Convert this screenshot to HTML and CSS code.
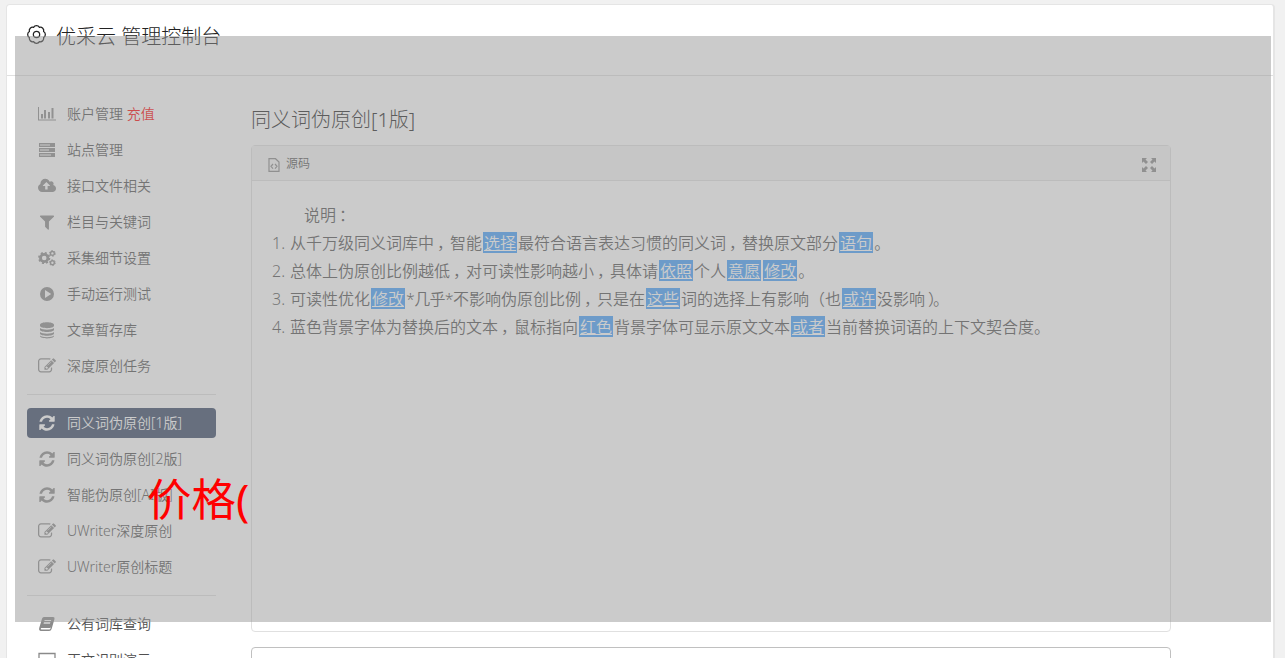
FILE: index.html
```html
<!DOCTYPE html>
<html lang="zh-CN">
<head>
  <meta charset="UTF-8">
  <meta name="viewport" content="width=device-width, initial-scale=1.0">
  <title>优采云 管理控制台</title>
  <link rel="stylesheet" href="styles.css">
</head>
<body>
  <!-- icon set -->
  <svg class="sprite">
    <symbol id="refresh" viewBox="-128 -128 1792 1792"><path d="M1511 928q0 5-1 7-64 268-268 434.500t-478 166.500q-146 0-282.500-55t-243.500-157l-129 129q-19 19-45 19t-45-19-19-45v-448q0-26 19-45t45-19h448q26 0 45 19t19 45-19 45l-137 137q71 66 161 102t187 36q134 0 250-65t186-179q11-17 53-117 8-23 30-23h192q13 0 22.500 9.500t9.500 22.500zm25-800v448q0 26-19 45t-45 19h-448q-26 0-45-19t-19-45 19-45l138-138q-148-137-349-137-134 0-250 65t-186 179q-11 17-53 117-8 23-30 23h-199q-13 0-22.500-9.500t-9.500-22.500v-7q65-268 270-434.500t480-166.500q146 0 284 55.500t245 156.500l130-129q19-19 45-19t45 19 19 45z"/></symbol>
    <symbol id="edit" viewBox="0 0 1792 1792"><path d="M888 1184l116-116-152-152-116 116v56h96v96h56zm440-720q-16-16-33 1l-350 350q-17 17-1 33t33-1l350-350q17-17 1-33zm80 594v190q0 119-84.500 203.500t-203.500 84.500h-832q-119 0-203.500-84.500t-84.500-203.500v-832q0-119 84.500-203.500t203.500-84.500h832q63 0 117 25 15 7 18 23 3 17-9 29l-49 49q-14 14-32 8-23-6-45-6h-832q-66 0-113 47t-47 113v832q0 66 47 113t113 47h832q66 0 113-47t47-113v-126q0-13 9-22l64-64q15-15 35-7t20 29zm-96-738l288 288-672 672h-288v-288zm444 132l-92 92-288-288 92-92q28-28 68-28t68 28l152 152q28 28 28 68t-28 68z"/></symbol>
    <symbol id="filter" viewBox="0 0 1792 1792"><path d="M1595 295q17 41-14 70l-493 493v742q0 42-39 59-13 5-25 5-27 0-45-19l-256-256q-19-19-19-45v-486l-493-493q-31-29-14-70 17-39 59-39h1280q42 0 59 39z"/></symbol>
    <symbol id="cloud" viewBox="-64 0 1920 1792"><path d="M1216 864q0-14-9-23l-352-352q-9-9-23-9t-23 9l-351 351q-10 12-10 24 0 14 9 23t23 9h224v352q0 13 9.500 22.500t22.500 9.500h192q13 0 22.500-9.500t9.500-22.500v-352h224q13 0 22.500-9.500t9.500-22.500zm640 288q0 159-112.500 271.500t-271.500 112.500h-1088q-185 0-316.500-131.500t-131.500-316.500q0-130 70-240t188-165q-2-30-2-43 0-212 150-362t362-150q156 0 285.500 87t188.500 231q71-62 166-62 106 0 181 75t75 181q0 76-41 138 130 31 213.500 135.500t83.500 238.500z"/></symbol>
    <symbol id="chart" viewBox="0 0 18 18"><path d="M0 2h1v12.500h17v1H0zM3 9h2v4.500H3zM6 5h2v8.500H6zM10 7h2v6.500h-2zM13.500 3h2v10.500h-2z"/></symbol>
    <symbol id="server" viewBox="0 0 18 18"><path fill-rule="evenodd" d="M1 2h16v4H1zM2 3.400v1.200h10V3.400zM1 7h16v4H1zM2 8.400v1.200h9V8.400zM1 12h16v4H1zM2 13.400v1.200h11v-1.200z"/></symbol>
    <symbol id="cogs" viewBox="0 0 18 18">
      <g fill="none" stroke="currentColor">
        <circle cx="6.200" cy="9" r="3.700" stroke-width="2.800"/>
        <circle cx="6.200" cy="9" r="5.300" stroke-width="1.600" stroke-dasharray="2.080 2.080"/>
        <circle cx="14.400" cy="4.400" r="1.900" stroke-width="1.400"/>
        <circle cx="14.400" cy="4.400" r="2.900" stroke-width="1" stroke-dasharray="1.520 1.520"/>
        <circle cx="14.400" cy="13.700" r="1.900" stroke-width="1.400"/>
        <circle cx="14.400" cy="13.700" r="2.900" stroke-width="1" stroke-dasharray="1.520 1.520"/>
      </g>
    </symbol>
    <symbol id="play" viewBox="0 0 18 18"><path fill-rule="evenodd" d="M9 2a7 7 0 1 1 0 14A7 7 0 0 1 9 2zM7 5v8l6.200-4z"/></symbol>
    <symbol id="database" viewBox="0 0 18 18"><path d="M2 3.800C2 .4 16 .4 16 3.800v1C16 8 2 8 2 4.800zM2 7c2 2.300 12 2.300 14 0v1.800c0 3-14 3-14 0zM2 11c2 2.300 12 2.300 14 0v1.600c0 3-14 3-14 0zM2 14.500c2 2.200 12 2.200 14 0v.600c0 3.200-14 3.200-14 0z"/></symbol>
    <symbol id="book" viewBox="0 0 18 18"><path fill-rule="evenodd" d="M6 2h9q2 .2 1.500 2L13.600 14q-.6 2-2.500 2H3Q.5 15.500 1.200 13L4 3.800Q4.500 2 6 2zM6.700 5l-.4 1.100h6.500l.4-1.100zM5.900 7.500l-.4 1.100H12l.4-1.100zM3 13q-.8 1.600.7 1.600h7.500q1 0 1.400-1.400l.1-.6-1 .4z"/></symbol>
    <symbol id="screen" viewBox="0 0 18 18"><path d="M1 2.500h16v11H1zM6 16h6" fill="none" stroke="currentColor" stroke-width="1.300"/></symbol>
    <symbol id="gear" viewBox="0 0 18 18">
      <g fill="none" stroke="currentColor" stroke-width="1.200" stroke-linejoin="round">
        <circle cx="9" cy="9" r="3"/>
        <path d="M11.790 2.260A3.200 3.200 0 0 1 15.740 6.210A3.200 3.200 0 0 1 15.740 11.790A3.200 3.200 0 0 1 11.790 15.740A3.200 3.200 0 0 1 6.210 15.740A3.200 3.200 0 0 1 2.260 11.790A3.200 3.200 0 0 1 2.260 6.210A3.200 3.200 0 0 1 6.210 2.260A3.200 3.200 0 0 1 11.790 2.260z"/>
      </g>
    </symbol>
    <symbol id="code" viewBox="0 0 12 14"><path d="M1 .700h6.500L11 4v9.300H1zM5 6 3 8.300 5 10.600M7 6l2 2.300-2 2.300" fill="none" stroke="currentColor" stroke-width="1.200"/></symbol>
    <symbol id="expand" viewBox="0 0 14 14"><path d="M0 0h5L3.500 1.500 6 4 4 6 1.500 3.500 0 5zM14 0v5l-1.500-1.500L10 6 8 4l2.500-2.500L9 0zM0 14V9l1.500 1.500L4 8l2 2-2.500 2.500L5 14zM14 14H9l1.500-1.500L8 10l2-2 2.500 2.500L14 9z"/></symbol>
  </svg>

  <div class="card">
    <header class="card-header">
      <svg class="gear"><use href="#gear"/></svg>
      <h1>优采云 管理控制台</h1>
    </header>
    <div class="content">
      <nav class="sidebar">
        <a class="item"><svg><use href="#chart"/></svg><span>账户管理 <b>充值</b></span></a>
        <a class="item"><svg><use href="#server"/></svg>站点管理</a>
        <a class="item"><svg><use href="#cloud"/></svg>接口文件相关</a>
        <a class="item"><svg><use href="#filter"/></svg>栏目与关键词</a>
        <a class="item"><svg><use href="#cogs"/></svg>采集细节设置</a>
        <a class="item"><svg><use href="#play"/></svg>手动运行测试</a>
        <a class="item"><svg><use href="#database"/></svg>文章暂存库</a>
        <a class="item"><svg><use href="#edit"/></svg>深度原创任务</a>
        <hr>
        <a class="item active"><svg><use href="#refresh"/></svg>同义词伪原创[1版]</a>
        <a class="item"><svg><use href="#refresh"/></svg>同义词伪原创[2版]</a>
        <a class="item"><svg><use href="#refresh"/></svg>智能伪原创[AI版]</a>
        <a class="item"><svg><use href="#edit"/></svg>UWriter深度原创</a>
        <a class="item"><svg><use href="#edit"/></svg>UWriter原创标题</a>
        <hr>
        <a class="item"><svg><use href="#book"/></svg>公有词库查询</a>
        <a class="item"><svg><use href="#screen"/></svg>正文识别演示</a>
      </nav>
      <main class="main">
        <h2>同义词伪原创[1版]</h2>
        <section class="panel">
          <div class="toolbar">
            <svg class="code"><use href="#code"/></svg>
            <span>源码</span>
            <svg class="expand"><use href="#expand"/></svg>
          </div>
          <div class="editor">
            <p class="intro">说明<span class="mid">：</span></p>
            <p><i class="num">1.</i>从千万级同义词库中<span class="mid">，</span>智能<mark>选择</mark>最符合语言表达习惯的同义词<span class="mid">，</span>替换原文部分<mark>语句</mark>。</p>
            <p><i class="num">2.</i>总体上伪原创比例越低<span class="mid">，</span>对可读性影响越小<span class="mid">，</span>具体请<mark>依照</mark>个人<mark>意愿</mark><mark>修改</mark>。</p>
            <p><i class="num">3.</i>可读性优化<mark>修改</mark><span class="star">*几乎*</span>不影响伪原创比例<span class="mid">，</span>只是在<mark>这些</mark>词的选择上有影响（也<mark>或许</mark>没影响<span class="mid">）</span>。</p>
            <p><i class="num">4.</i>蓝色背景字体为替换后的文本<span class="mid">，</span>鼠标指向<mark>红色</mark>背景字体可显示原文文本<mark>或者</mark>当前替换词语的上下文契合度。</p>
          </div>
        </section>
        <div class="result"></div>
      </main>
    </div>
  </div>

  <div class="overlay"></div>
  <div class="caption">价格(</div>
</body>
</html>
```

FILE: styles.css
```css
* {
  box-sizing: border-box;
}

body {
  margin: 0;
  padding: 4px 10px 0 6px;
  height: 658px;
  overflow: hidden;
  background: #f1f1f1;
  color: #505050;
  font-family: "Noto Sans", "Noto Sans CJK SC", sans-serif;
  font-weight: 350;
  font-size: 14px;
}

svg {
  fill: currentColor;
  flex: none;
}

.sprite {
  display: none;
}

.card {
  height: 654px;
  overflow: hidden;
  background: #fff;
  border: 1px solid #e5e5e5;
  border-right-width: 2px;
  border-bottom: 0;
  border-radius: 4px 4px 0 0;
}

.card-header {
  display: flex;
  height: 71px;
  padding: 18px 20px 0;
  border-bottom: 1px solid #e0e0e0;
  color: #222;
}

.card-header h1 {
  margin: 0 0 0 10px;
  font-size: 20px;
  font-weight: 300;
  line-height: 28px;
}

.gear {
  width: 19px;
  height: 19px;
  margin-top: 2px;
}

.content {
  display: flex;
  padding-left: 20px;
}

.sidebar {
  width: 189px;
  padding-top: 23px;
}

.item {
  display: flex;
  align-items: center;
  height: 30px;
  margin-bottom: 6px;
  padding-left: 11px;
  border-radius: 4px;
  line-height: 30px;
  white-space: nowrap;
}

.item svg {
  width: 18px;
  height: 18px;
  margin-right: 11px;
  color: #8a8a8a;
}

.item b {
  color: #f00;
  font-weight: 350;
}

.item.active {
  background: #364765;
  color: #fff;
}

.item.active svg {
  color: #fff;
}

.sidebar hr {
  height: 1px;
  margin: 13px 0;
  border: 0;
  background: #e0e0e0;
}

.main {
  width: 920px;
  margin-left: 35px;
  padding-top: 29px;
}

.main h2 {
  margin: 0 0 10px;
  color: #222;
  font-size: 20px;
  font-weight: 300;
  line-height: 30px;
}

.panel {
  height: 487px;
  border: 1px solid #e0e0e0;
  border-radius: 4px;
}

.toolbar {
  display: flex;
  align-items: center;
  height: 35px;
  padding: 0 14px 0 16px;
  background: #f5f5f5;
  border-bottom: 1px solid #e0e0e0;
  font-size: 12px;
}

.toolbar span {
  margin-left: 6px;
}

.code {
  width: 12px;
  height: 14px;
  margin-top: 3px;
  color: #888;
}

.expand {
  width: 14px;
  height: 14px;
  margin: 3px 0 0 auto;
  color: #888;
}

.editor {
  padding: 20px;
  font-size: 16px;
  line-height: 28px;
  white-space: nowrap;
}

.editor p {
  height: 28px;
  margin: 0;
}

.editor .intro {
  padding-left: 32px;
}

.num {
  display: inline-block;
  width: 18px;
  font-style: normal;
}

.editor mark {
  display: inline-block;
  height: 21px;
  margin: -5px 1px 0;
  padding: 0 1px;
  background: #439ffb;
  color: #fff;
  line-height: 22px;
  text-decoration: underline;
  vertical-align: middle;
}

/* centre the full-width punctuation in its cell */
.mid {
  margin: 0 -3px 0 3px;
}

.star {
  letter-spacing: -0.7px;
}

.result {
  height: 100px;
  margin-top: 15px;
  border: 1px solid #c0c0c0;
  border-radius: 4px;
}

/* dimmed layer over the console */
.overlay {
  position: absolute;
  left: 15px;
  top: 36px;
  width: 1256px;
  height: 586px;
  background: rgba(151, 151, 151, 0.5);
}

.caption {
  position: absolute;
  left: 147px;
  top: 467px;
  color: #f00;
  font-size: 44.5px;
  font-weight: 400;
  line-height: 64px;
}
```
